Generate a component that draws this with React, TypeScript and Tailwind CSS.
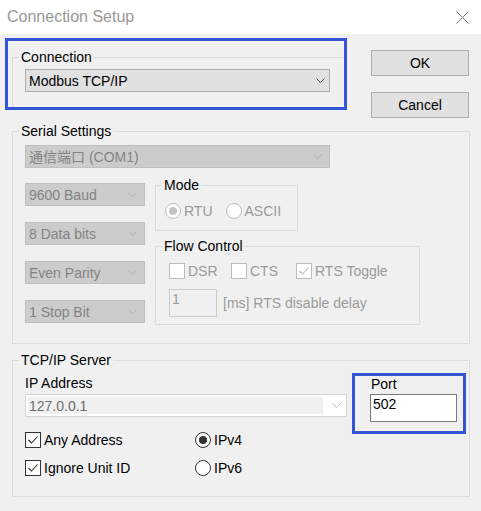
import React from "react";

const font = { fontFamily: '"Liberation Sans", "Noto Sans CJK SC", Arial, sans-serif' };

function Chevron({ color }: { color: string }) {
  return (
    <svg width="9" height="5" viewBox="0 0 9 5" className="shrink-0">
      <polyline points="0.5,0.5 4.5,4.5 8.5,0.5" fill="none" stroke={color} strokeWidth="1" />
    </svg>
  );
}

function Combo({ text, width, disabled }: { text: string; width: string; disabled?: boolean }) {
  return (
    <div
      className={`${width} h-[23px] flex items-center justify-between pl-[3px] border ${
        disabled
          ? "bg-[#cccccc] border-[#bfbfbf] text-[#838383] pr-[7px]"
          : "bg-[#e1e1e1] border-[#adadad] text-black pr-[4px]"
      }`}
    >
      <span className="whitespace-nowrap">{text}</span>
      <Chevron color={disabled ? "#b0b0b0" : "#555555"} />
    </div>
  );
}

function Check({ label, checked, disabled, width }: { label: string; checked?: boolean; disabled?: boolean; width?: string }) {
  const stroke = disabled ? "#bcbcbc" : "#333333";
  return (
    <div className={`flex items-center gap-[3px] h-[16px] ${width ?? ""}`}>
      <div
        className={`w-[16px] h-[16px] shrink-0 border bg-white flex items-center justify-center ${
          disabled ? "border-[#bcbcbc]" : "border-[#333333]"
        }`}
      >
        {checked && (
          <svg width="12" height="10" viewBox="0 0 12 10">
            <polyline points="1.5,5 4.5,8 10.5,1.5" fill="none" stroke={stroke} strokeWidth="1.1" />
          </svg>
        )}
      </div>
      <span className={disabled ? "text-[#9a9a9a]" : "text-black"}>{label}</span>
    </div>
  );
}

function Radio({ label, checked, disabled }: { label: string; checked?: boolean; disabled?: boolean }) {
  return (
    <div className="flex items-center gap-[3px] h-[16px]">
      <div
        className={`w-[16px] h-[16px] shrink-0 rounded-full border bg-white flex items-center justify-center ${
          disabled ? "border-[#bcbcbc]" : "border-[#333333]"
        }`}
      >
        {checked && (
          <div className={`w-[8px] h-[8px] rounded-full ${disabled ? "bg-[#c4c4c4]" : "bg-[#333333]"}`} />
        )}
      </div>
      <span className={disabled ? "text-[#9a9a9a]" : "text-black"}>{label}</span>
    </div>
  );
}

function Button({ children }: { children: React.ReactNode }) {
  return (
    <div className="w-[98px] h-[26px] bg-[#e1e1e1] border border-[#adadad] flex items-center justify-center text-black">
      {children}
    </div>
  );
}

export default function App() {
  return (
    <div className="w-[481px] h-[511px] bg-[#f0f0f0] text-[14px] leading-[16px] overflow-hidden" style={font}>
      {/* title bar */}
      <div className="h-[34px] bg-white flex items-center justify-between pl-[7px] pr-[12px] pb-[1px]">
        <span className="text-[16px] text-[#999999]">Connection Setup</span>
        <svg width="13" height="13" viewBox="0 0 13 13" className="mt-[1px]">
          <line x1="0.5" y1="0.5" x2="12.5" y2="12.5" stroke="#7a7a7a" strokeWidth="1" />
          <line x1="12.5" y1="0.5" x2="0.5" y2="12.5" stroke="#7a7a7a" strokeWidth="1" />
        </svg>
      </div>

      <div className="pl-[5px]">
        {/* connection + buttons */}
        <div className="flex mt-[4px]">
          <div className="w-[342px] h-[72px] border-[3px] border-[#3355d6] pl-[4px] pt-[8px]">
            <fieldset className="h-[58px] border-0 border-t border-l border-[#dcdcdc] p-0 m-0">
              <legend className="ml-[6px] px-[2px] leading-[16px]">Connection</legend>
              <div className="pl-[12px] pt-[4px]">
                <Combo text="Modbus TCP/IP" width="w-[305px]" />
              </div>
            </fieldset>
          </div>
          <div className="ml-[24px] pt-[12px] flex flex-col gap-[16px]">
            <Button>OK</Button>
            <Button>Cancel</Button>
          </div>
        </div>

        {/* serial settings */}
        <fieldset className="ml-[7px] mt-[5px] w-[458px] border border-[#dcdcdc] p-0 m-0">
          <legend className="ml-[6px] px-[2px] leading-[16px]">Serial Settings</legend>
          <div className="pl-[12px] pt-[6px] pb-[18px]">
            <Combo text="通信端口 (COM1)" width="w-[305px]" disabled />
            <div className="flex mt-[9px]">
              <div className="w-[120px] pt-[6px] flex flex-col gap-[16px]">
                <Combo text="9600 Baud" width="w-[120px]" disabled />
                <Combo text="8 Data bits" width="w-[120px]" disabled />
                <Combo text="Even Parity" width="w-[120px]" disabled />
                <Combo text="1 Stop Bit" width="w-[120px]" disabled />
              </div>
              <div className="ml-[10px] flex flex-col">
                <fieldset className="w-[143px] border border-[#dcdcdc] p-0 m-0">
                  <legend className="ml-[6px] px-[2px] leading-[16px]">Mode</legend>
                  <div className="pl-[9px] pt-[10px] pb-[11px] flex gap-[13px]">
                    <Radio label="RTU" checked disabled />
                    <Radio label="ASCII" disabled />
                  </div>
                </fieldset>
                <fieldset className="w-[265px] mt-[7px] border border-[#dcdcdc] p-0 m-0">
                  <legend className="ml-[6px] px-[2px] leading-[16px]">Flow Control</legend>
                  <div className="pl-[13px] pt-[9px] pb-[7px]">
                    <div className="flex">
                      <Check label="DSR" disabled width="w-[62px]" />
                      <Check label="CTS" disabled width="w-[65px]" />
                      <Check label="RTS Toggle" checked disabled />
                    </div>
                    <div className="flex items-center mt-[10px]">
                      <div className="w-[48px] h-[28px] border border-[#cccccc] bg-[#f0f0f0] pl-[2px] pt-[1px] text-[#9a9a9a]">
                        1
                      </div>
                      <span className="ml-[6px] text-[#9a9a9a]">[ms] RTS disable delay</span>
                    </div>
                  </div>
                </fieldset>
              </div>
            </div>
          </div>
        </fieldset>

        {/* tcp/ip server */}
        <fieldset className="ml-[7px] mt-[8px] w-[458px] border border-[#dcdcdc] p-0 m-0">
          <legend className="ml-[6px] px-[2px] leading-[16px]">TCP/IP Server</legend>
          <div className="pl-[12px] pb-[20px] flex">
            <div className="w-[322px] pt-[7px]">
              <div>IP Address</div>
              <div className="mt-[3px] w-[322px] h-[23px] border border-[#d4d4d4] bg-white flex items-center pr-[5px]">
                <div className="ml-[2px] w-[295px] h-[17px] bg-[#f0f0f0] flex items-center pl-[1px] text-[#6d6d6d]">
                  127.0.0.1
                </div>
                <div className="flex-1" />
                <Chevron color="#bdbdbd" />
              </div>
              <div className="mt-[15px] grid grid-cols-[170px_auto] gap-y-[12px]">
                <Check label="Any Address" checked />
                <Radio label="IPv4" checked />
                <Check label="Ignore Unit ID" checked />
                <Radio label="IPv6" />
              </div>
            </div>
            <div className="ml-[5px] mt-[5px]">
              <div className="w-[114px] h-[61px] border-[3px] border-[#3355d6] pl-[15px]">
                <div className="pl-[1px]">Port</div>
                <div className="mt-[2px] w-[87px] h-[28px] border border-[#7a7a7a] bg-white pl-[2px] pt-[1px] text-black">
                  502
                </div>
              </div>
            </div>
          </div>
        </fieldset>
      </div>
    </div>
  );
}
